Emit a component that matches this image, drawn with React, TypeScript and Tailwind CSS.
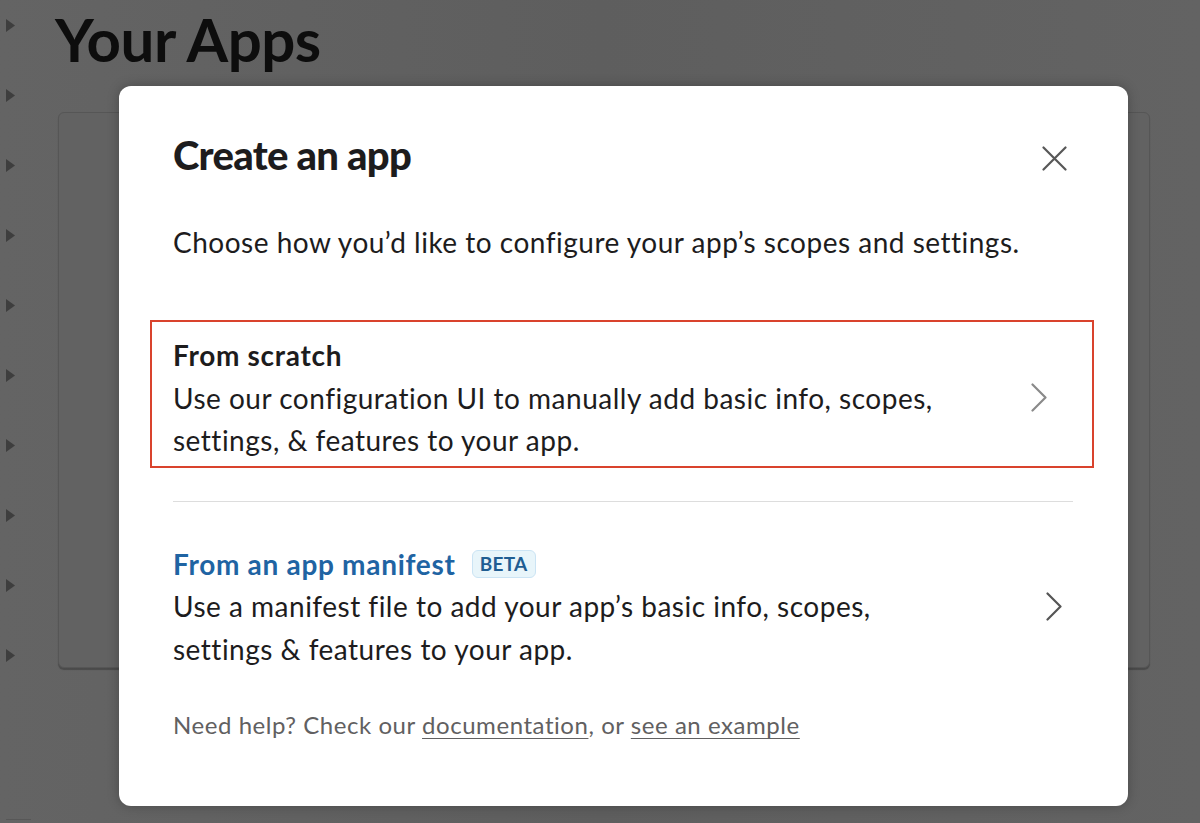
import React from "react";

function Chevron({ color }: { color: string }) {
  return (
    <svg width="16" height="29" viewBox="0 0 16 29" fill="none">
      <polyline points="1.5,1.5 14.5,14.5 1.5,27.5" stroke={color} strokeWidth="2.2" strokeLinecap="round" strokeLinejoin="round" />
    </svg>
  );
}

function CloseIcon() {
  return (
    <svg width="25" height="25" viewBox="0 0 25 25" fill="none">
      <path d="M1.5 1.5 L23.5 23.5 M23.5 1.5 L1.5 23.5" stroke="#575757" strokeWidth="2.2" strokeLinecap="round" />
    </svg>
  );
}

function Triangle() {
  return (
    <svg width="9" height="13" viewBox="0 0 9 13">
      <polygon points="0,0 9,6.5 0,13" fill="#3e3e3e" />
    </svg>
  );
}

export default function App() {
  const rows = Array.from({ length: 10 });
  return (
    <div className="relative w-[1200px] h-[823px] overflow-hidden bg-[#626262] font-['Lato','Noto_Sans',sans-serif]">
      {/* background page */}
      <div className="flex h-full bg-gradient-to-r from-[#646464] via-[#5e5e5e] to-[#636363]">
        <div className="flex w-[55px] flex-col gap-[57px] pl-[6px] pt-[19px]">
          {rows.map((_, i) => (
            <Triangle key={i} />
          ))}
          <div className="mt-[100px] h-px w-[25px] bg-[#575757]" />
        </div>
        <div className="flex flex-col pt-[9px]">
          <h1 className="text-[60px] font-bold leading-[60px] tracking-[-0.5px] text-[#0d0d0d]">Your Apps</h1>
          <div className="ml-[3px] mt-[43px] h-[556px] w-[1092px] rounded-[6px] border border-[#565656] bg-[#626262] shadow-[0_2px_1px_rgba(0,0,0,0.25)]" />
        </div>
      </div>

      {/* modal */}
      <div className="absolute left-[119px] top-[86px] w-[1009px] rounded-[12px] bg-white pl-[54px] pr-[55px] pt-[45px] pb-[65px] shadow-[0_0_12px_rgba(0,0,0,0.25)]">
        <div className="flex items-center justify-between">
          <h2 className="text-[40px] font-black leading-[48px] tracking-[-0.7px] text-[#1d1c1d]">Create an app</h2>
          <div className="mr-[6px] mt-[6px]">
            <CloseIcon />
          </div>
        </div>

        <p className="mt-[42px] text-[28px] leading-[42px] tracking-[0.5px] text-[#1d1c1d]">
          Choose how you’d like to configure your app’s scopes and settings.
        </p>

        <div className="relative mt-[71px] flex items-center justify-between">
          <div className="pointer-events-none absolute -left-[23px] -right-[21px] -top-[14px] -bottom-[6px] border-[2.5px] border-[#d9432d]" />
          <div className="text-[28px] leading-[42.5px] tracking-[0.5px] text-[#1d1c1d]">
            <div className="font-bold tracking-[0.7px]">From scratch</div>
            <div>
              Use our configuration UI to manually add basic info, scopes,
              <br />
              settings, &amp; features to your app.
            </div>
          </div>
          <div className="mr-[26px]">
            <Chevron color="#8a8a8a" />
          </div>
        </div>

        <div className="mt-[39px] h-px bg-[#dddddd]" />

        <div className="mt-[41px] flex items-center justify-between">
          <div className="text-[28px] leading-[42.5px] tracking-[0.5px] text-[#1d1c1d]">
            <div className="flex items-center">
              <span className="font-bold tracking-[0.7px] text-[#1f64a3]">From an app manifest</span>
              <span className="ml-[16px] inline-flex h-[28px] items-center rounded-[6px] border border-[#cbe4f4] bg-[#e8f5fa] px-[7px] text-[19px] font-bold leading-none tracking-[0.3px] text-[#1f5d92]">
                BETA
              </span>
            </div>
            <div>
              Use a manifest file to add your app’s basic info, scopes,
              <br />
              settings &amp; features to your app.
            </div>
          </div>
          <div className="mr-[11px]">
            <Chevron color="#555555" />
          </div>
        </div>

        <p className="mt-[39px] text-[24px] leading-[32px] tracking-[0.55px] text-[#616061]">
          Need help? Check our <span className="underline decoration-1 underline-offset-[4px]">documentation</span>, or{" "}
          <span className="underline decoration-1 underline-offset-[4px]">see an example</span>
        </p>
      </div>
    </div>
  );
}
